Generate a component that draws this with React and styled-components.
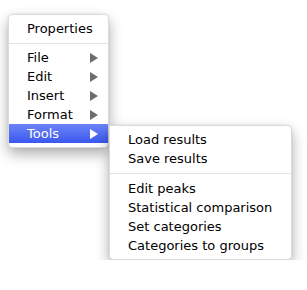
import React from "react";
import styled, { createGlobalStyle } from "styled-components";

const Global = createGlobalStyle`
  html, body { margin: 0; padding: 0; background: #ffffff; }
  body { font-family: "DejaVu Sans", "Liberation Sans", sans-serif; }
`;

const Stage = styled.div`
  display: flex;
  align-items: flex-start;
  padding: 14px 0 0 8px;
`;

const Menu = styled.div`
  position: relative;
  box-sizing: border-box;
  width: ${(p) => p.$width}px;
  margin-top: ${(p) => p.$offset || 0}px;
  padding: 4px 0;
  background: rgba(255, 255, 255, 0.98);
  border: 1px solid rgba(0, 0, 0, 0.14);
  border-radius: ${(p) => (p.$sub ? "0 5px 5px 5px" : "5px")};
  box-shadow: 0 6px 14px rgba(0, 0, 0, 0.32), 0 0 2px rgba(0, 0, 0, 0.12);
  z-index: ${(p) => (p.$sub ? 2 : 1)};
`;

const Item = styled.div`
  display: flex;
  align-items: center;
  justify-content: space-between;
  height: 19px;
  padding: 0 10px 0 18px;
  font-size: 13px;
  line-height: 19px;
  color: ${(p) => (p.$active ? "#ffffff" : "#000000")};
  background: ${(p) =>
    p.$active ? "linear-gradient(to bottom, #6c84f7 0%, #3b58ee 100%)" : "transparent"};
  white-space: nowrap;
`;

const Separator = styled.div`
  height: 1px;
  background: #e3e3e3;
  margin: 5px 0 ${(p) => p.$bottom || 4}px;
`;

const Arrow = styled.span`
  width: 0;
  height: 0;
  border-top: 5px solid transparent;
  border-bottom: 5px solid transparent;
  border-left: 8px solid ${(p) => (p.$active ? "#ffffff" : "#6d6d6d")};
`;

const mainItems = ["File", "Edit", "Insert", "Format", "Tools"];
const subTop = ["Load results", "Save results"];
const subBottom = ["Edit peaks", "Statistical comparison", "Set categories", "Categories to groups"];

export default function App() {
  return (
    <>
      <Global />
      <Stage>
        <Menu $width={101}>
          <Item>Properties</Item>
          <Separator />
          {mainItems.map((label) => (
            <Item key={label} $active={label === "Tools"}>
              <span>{label}</span>
              <Arrow $active={label === "Tools"} />
            </Item>
          ))}
        </Menu>
        <Menu $width={183} $offset={111} $sub>
          {subTop.map((l) => (
            <Item key={l}>{l}</Item>
          ))}
          <Separator $bottom={5} />
          {subBottom.map((l) => (
            <Item key={l}>{l}</Item>
          ))}
        </Menu>
      </Stage>
    </>
  );
}
